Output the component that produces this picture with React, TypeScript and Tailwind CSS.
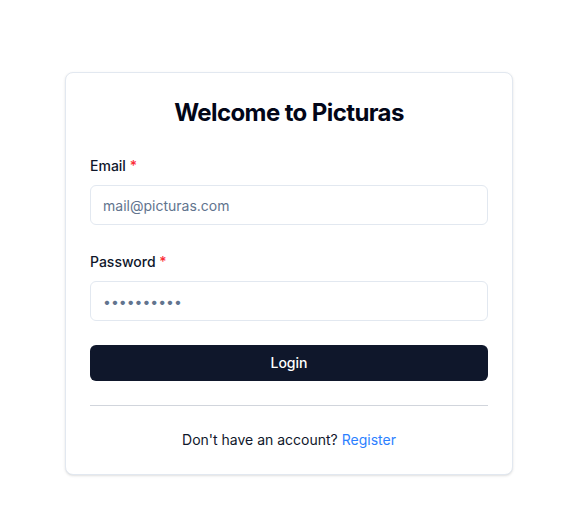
import React from "react";

export default function App() {
  return (
    <div
      className="min-h-[516px] bg-white pl-0.5 pt-[72px]"
      style={{ fontFamily: "Inter, 'Noto Sans', sans-serif" }}
    >
      <div className="mx-auto w-[448px] rounded-lg border border-slate-200 bg-white p-6 shadow-sm">
        <h1 className="text-center text-2xl font-bold tracking-tight text-slate-950">
          Welcome to Picturas
        </h1>

        <form className="mt-[27px]" onSubmit={(e) => e.preventDefault()}>
          <label htmlFor="email" className="mb-[9px] block text-sm font-medium text-slate-900">
            Email <span className="text-red-500">*</span>
          </label>
          <input
            id="email"
            type="email"
            placeholder="mail@picturas.com"
            className="h-10 w-full rounded-md border border-slate-200 bg-white px-3 text-sm text-slate-900 outline-none placeholder:text-slate-500"
          />

          <label htmlFor="password" className="mb-[9px] mt-[27px] block text-sm font-medium text-slate-900">
            Password <span className="text-red-500">*</span>
          </label>
          <input
            id="password"
            type="password"
            placeholder="••••••••••"
            className="h-10 w-full rounded-md border border-slate-200 bg-white px-3 text-sm text-slate-900 outline-none placeholder:text-slate-500"
          />

          <button
            type="submit"
            className="mt-6 h-9 w-full rounded-md bg-slate-900 text-sm font-medium text-white"
          >
            Login
          </button>
        </form>

        <div className="mt-6 h-px bg-gray-300" />

        <p className="pt-6 text-center text-sm text-slate-900">
          Don't have an account?{" "}
          <a href="#" className="text-blue-500">
            Register
          </a>
        </p>
      </div>
    </div>
  );
}
